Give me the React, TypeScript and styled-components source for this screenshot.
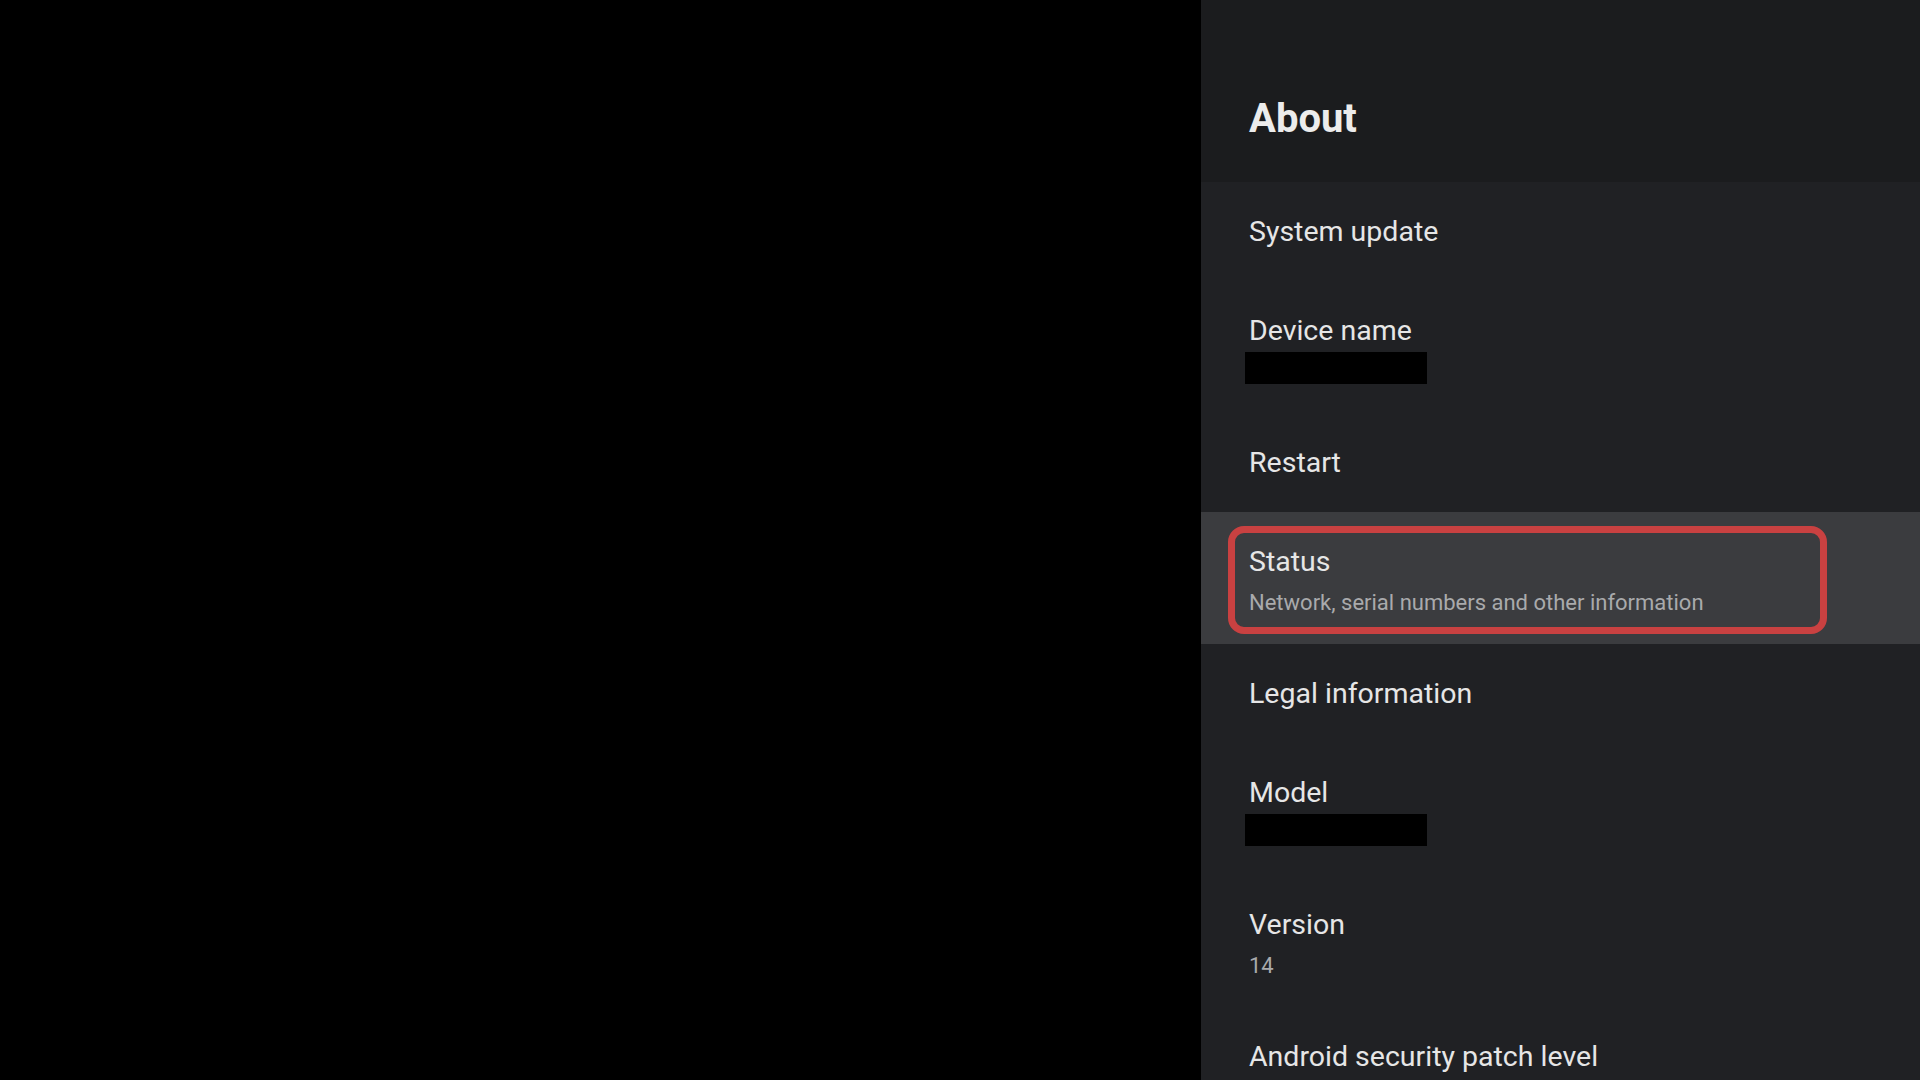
import styled, { createGlobalStyle } from "styled-components"

const GlobalStyle = createGlobalStyle`
  html, body {
    margin: 0;
    padding: 0;
    background: #000000;
  }
  body {
    font-family: Roboto, "Noto Sans", "Liberation Sans", sans-serif;
    -webkit-font-smoothing: antialiased;
  }
`

const Screen = styled.div`
  width: 1920px;
  height: 1080px;
  display: flex;
  background: #000000;
  overflow: hidden;
`

const Backdrop = styled.div`
  flex: 1;
  background: #000000;
`

const Panel = styled.aside`
  width: 719px;
  height: 100%;
  display: flex;
  flex-direction: column;
  background: #202124;
`

const Header = styled.header`
  height: 182px;
  box-sizing: border-box;
  padding: 95px 48px 0;
  background: #1b1c1e;
  flex-shrink: 0;
`

const Title = styled.h1`
  margin: 0;
  font-size: 40px;
  line-height: 48px;
  font-weight: 700;
  color: #ececec;
`

const List = styled.ul`
  list-style: none;
  margin: 0;
  padding: 0;
`

const Row = styled.li<{ $focused?: boolean }>`
  position: relative;
  box-sizing: border-box;
  padding: 30px 48px 29px;
  background: ${(p) => (p.$focused ? "#3b3c3f" : "transparent")};
`

const ItemTitle = styled.div`
  font-size: 28.5px;
  line-height: 40px;
  color: #e6e6e6;
`

const ItemSummary = styled.div`
  margin-top: 8px;
  font-size: 22px;
  line-height: 25px;
  color: #a9aaac;
`

const Redacted = styled.div`
  width: 182px;
  height: 32px;
  margin: 1px 0 0 -4px;
  background: #000000;
`

const FocusRing = styled.div`
  position: absolute;
  left: 27px;
  right: 93px;
  top: 14px;
  bottom: 10px;
  border: 7px solid #c94141;
  border-radius: 16px;
  pointer-events: none;
`

type Item = {
  title: string
  summary?: string
  redacted?: boolean
  focused?: boolean
}

const items: Item[] = [
  { title: "System update" },
  { title: "Device name", redacted: true },
  { title: "Restart" },
  { title: "Status", summary: "Network, serial numbers and other information", focused: true },
  { title: "Legal information" },
  { title: "Model", redacted: true },
  { title: "Version", summary: "14" },
  { title: "Android security patch level" },
]

export default function App() {
  return (
    <>
      <GlobalStyle />
      <Screen>
        <Backdrop />
        <Panel>
          <Header>
            <Title>About</Title>
          </Header>
          <List>
            {items.map((item) => (
              <Row key={item.title} $focused={item.focused}>
                <ItemTitle>{item.title}</ItemTitle>
                {item.summary && <ItemSummary>{item.summary}</ItemSummary>}
                {item.redacted && <Redacted />}
                {item.focused && <FocusRing />}
              </Row>
            ))}
          </List>
        </Panel>
      </Screen>
    </>
  )
}
